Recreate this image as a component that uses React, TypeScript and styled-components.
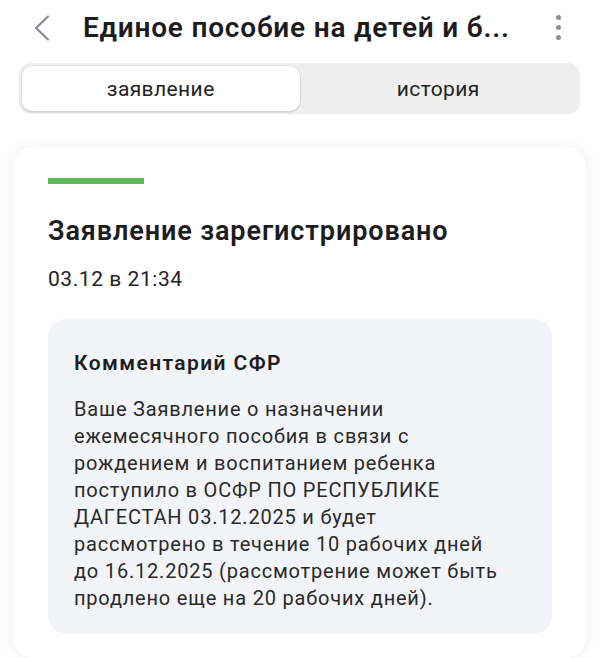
import React from "react";
import styled, { createGlobalStyle } from "styled-components";

const Global = createGlobalStyle`
  html, body { margin: 0; padding: 0; background: #ffffff; }
  body { font-family: Roboto, "Liberation Sans", sans-serif; color: #1e1e1e; -webkit-font-smoothing: antialiased; }
  * { box-sizing: border-box; }
`;

const Page = styled.div`
  width: 600px;
  height: 658px;
  overflow: hidden;
  display: flex;
  flex-direction: column;
`;

const Header = styled.header`
  height: 56px;
  display: flex;
  align-items: center;
  padding: 0 0 0 33px;
`;

const BackButton = styled.button`
  width: 18px;
  height: 28px;
  padding: 0;
  border: 0;
  background: none;
  display: flex;
  align-items: center;
  justify-content: center;
  margin-right: 32px;
`;

const Title = styled.h1`
  flex: 1;
  margin: 0;
  font-size: 28px;
  line-height: 34px;
  font-weight: 600;
  letter-spacing: 0.8px;
  color: #1c1c1e;
  white-space: nowrap;
  overflow: hidden;
`;

const MoreButton = styled.button`
  width: 44px;
  height: 30px;
  padding: 0;
  border: 0;
  background: none;
  display: flex;
  flex-direction: column;
  align-items: center;
  justify-content: center;
  gap: 5px;
  margin-right: 20px;
`;

const Dot = styled.span`
  width: 5px;
  height: 5px;
  border-radius: 50%;
  background: #8d909b;
`;

const Segmented = styled.div`
  margin: 8px 20px 0 19px;
  height: 51px;
  padding: 3px;
  background: #efefef;
  border-radius: 12px;
  display: grid;
  grid-template-columns: 1fr 1fr;
`;

const Segment = styled.div<{ $active?: boolean }>`
  display: flex;
  align-items: center;
  justify-content: center;
  border-radius: 10px;
  font-size: 21px;
  letter-spacing: 0.4px;
  color: #222;
  background: ${(p) => (p.$active ? "#ffffff" : "transparent")};
  box-shadow: ${(p) => (p.$active ? "0 1px 3px rgba(0,0,0,0.16), 0 0 0 0.5px rgba(0,0,0,0.06)" : "none")};
`;

const Card = styled.section`
  margin: 33px 14px 0 13px;
  padding: 31px 34px 24px 35px;
  background: #ffffff;
  border-radius: 20px;
  box-shadow: 0 0 14px rgba(0, 0, 0, 0.07);
  display: flex;
  flex-direction: column;
`;

const StatusBar = styled.div`
  width: 96px;
  height: 6px;
  background: #5bb75a;
`;

const StatusTitle = styled.h2`
  margin: 31px 0 0;
  font-size: 27px;
  line-height: 32px;
  font-weight: 600;
  letter-spacing: 0.9px;
  color: #1c1c1e;
`;

const DateText = styled.div`
  margin-top: 19px;
  font-size: 21px;
  line-height: 26px;
  letter-spacing: 0.55px;
  color: #222;
`;

const Comment = styled.div`
  margin-top: 27px;
  background: #f2f4f8;
  border-radius: 18px;
  padding: 31px 20px 22px 26px;
`;

const CommentTitle = styled.div`
  font-size: 21px;
  line-height: 26px;
  font-weight: 600;
  letter-spacing: 1.4px;
  color: #1e1e1e;
`;

const CommentBody = styled.p`
  margin: 20px 0 0;
  font-size: 20px;
  line-height: 27px;
  letter-spacing: 0.8px;
  color: #2a2a2a;
  white-space: pre-line;
`;

const commentLines = [
  "Ваше Заявление о назначении",
  "ежемесячного пособия в связи с",
  "рождением и воспитанием ребенка",
  "поступило в ОСФР ПО РЕСПУБЛИКЕ",
  "ДАГЕСТАН 03.12.2025 и будет",
  "рассмотрено в течение 10 рабочих дней",
  "до 16.12.2025 (рассмотрение может быть",
  "продлено еще на 20 рабочих дней).",
];

export default function App() {
  return (
    <Page>
      <Global />
      <Header>
        <BackButton aria-label="Назад">
          <svg width="16" height="26" viewBox="0 0 16 26" fill="none">
            <path d="M14 1.5 L2 13 L14 24.5" stroke="#8a8d97" strokeWidth="2.4" strokeLinecap="round" strokeLinejoin="round" />
          </svg>
        </BackButton>
        <Title>Единое пособие на детей и б...</Title>
        <MoreButton aria-label="Ещё">
          <Dot />
          <Dot />
          <Dot />
        </MoreButton>
      </Header>
      <Segmented>
        <Segment $active>заявление</Segment>
        <Segment>история</Segment>
      </Segmented>
      <Card>
        <StatusBar />
        <StatusTitle>Заявление зарегистрировано</StatusTitle>
        <DateText>03.12 в 21:34</DateText>
        <Comment>
          <CommentTitle>Комментарий СФР</CommentTitle>
          <CommentBody>{commentLines.join("\n")}</CommentBody>
        </Comment>
      </Card>
    </Page>
  );
}
